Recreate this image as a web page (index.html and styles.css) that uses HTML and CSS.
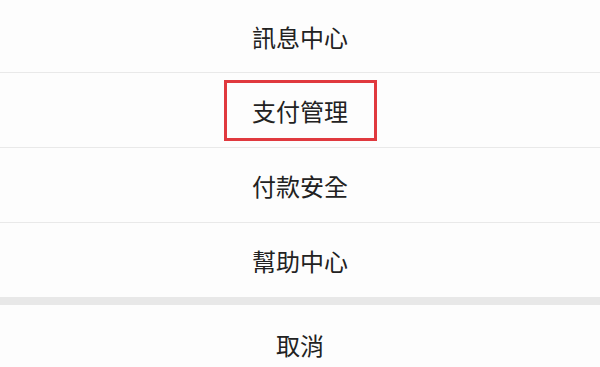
FILE: index.html
```html
<!DOCTYPE html>
<html lang="zh-Hant">
<head>
<meta charset="utf-8">
<link rel="stylesheet" href="styles.css">
</head>
<body>
<div class="sheet">
  <div class="group">
    <div class="item first">訊息中心</div>
    <div class="item"><span class="mark">支付管理</span></div>
    <div class="item">付款安全</div>
    <div class="item last">幫助中心</div>
  </div>
  <div class="band"></div>
  <div class="item cancel">取消</div>
</div>
</body>
</html>
```
FILE: styles.css
```css
html, body {
  margin: 0;
  padding: 0;
  background: #fdfdfd;
}
.sheet {
  width: 600px;
  height: 367px;
  overflow: hidden;
  display: flex;
  flex-direction: column;
  font-family: "Noto Sans CJK TC", "Noto Sans CJK SC", sans-serif;
  color: #222222;
}
.group {
  display: flex;
  flex-direction: column;
}
.item {
  flex: none;
  height: 74px;
  display: flex;
  align-items: center;
  justify-content: center;
  font-size: 24px;
  border-bottom: 1px solid #e9e9e9;
  background: #fdfdfd;
}
.item.first {
  height: 72px;
}
.item.last {
  border-bottom: none;
}
.band {
  flex: none;
  height: 8px;
  background: #e8e8e8;
}
.item.cancel {
  height: 78px;
  border-bottom: none;
}
.mark {
  display: flex;
  align-items: center;
  justify-content: center;
  width: 147px;
  height: 55px;
  border: 3px solid #e0393e;
}
```
